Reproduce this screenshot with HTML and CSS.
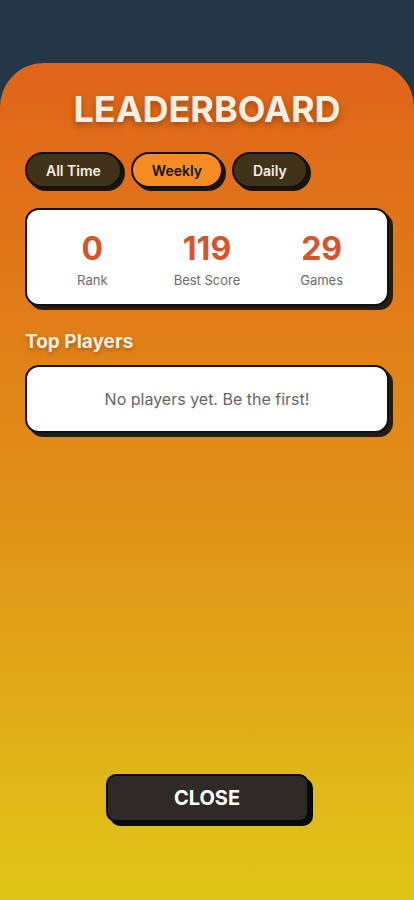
FILE: index.html
```html
<!DOCTYPE html>
<html lang="en">
<head>
  <meta charset="UTF-8">
  <meta name="viewport" content="width=device-width, initial-scale=1.0">
  <title>Leaderboard</title>
  <link rel="stylesheet" href="styles.css">
</head>
<body>

  <div class="sheet">
    <h1 class="title">LEADERBOARD</h1>

    <div class="tabs">
      <button class="tab">All Time</button>
      <button class="tab active">Weekly</button>
      <button class="tab">Daily</button>
    </div>

    <div class="card stats">
      <div class="stat">
        <div class="stat-value">0</div>
        <div class="stat-label">Rank</div>
      </div>
      <div class="stat">
        <div class="stat-value">119</div>
        <div class="stat-label">Best Score</div>
      </div>
      <div class="stat">
        <div class="stat-value">29</div>
        <div class="stat-label">Games</div>
      </div>
    </div>

    <h2 class="section-title">Top Players</h2>
    <div class="card empty">No players yet. Be the first!</div>

    <button class="close">CLOSE</button>
  </div>

</body>
</html>
```

FILE: styles.css
```css
body {
  margin: 0;
  padding: 0;
  background-color: #253747;
  font-family: Inter, "Noto Sans", sans-serif;
}

.sheet {
  margin-top: 63px;
  min-height: 837px;
  box-sizing: border-box;
  padding: 0 25px 78px 25px;
  border-radius: 44px 44px 0 0;
  background: linear-gradient(180deg, #e06419 0%, #e09018 52%, #e0c618 100%);
  display: flex;
  flex-direction: column;
}

.title {
  margin: 24px 0 0 0;
  text-align: center;
  font-size: 36px;
  font-weight: 700;
  line-height: 44px;
  color: #f6efe2;
  text-shadow: 0 3px 6px rgba(90, 30, 0, 0.45);
}

.tabs {
  display: flex;
  gap: 9px;
  margin-top: 21px;
}

.tab {
  height: 36px;
  padding: 0 19px;
  border: 2px solid #111;
  border-radius: 18px;
  background: #41331a;
  color: #f5efe4;
  font-family: inherit;
  font-size: 14px;
  font-weight: 600;
  box-shadow: 3px 3px 0 #1d1408;
  cursor: pointer;
}

.tab.active {
  background: #f58c23;
  color: #111;
}

.card {
  background: #fff;
  border: 2px solid #111;
  border-radius: 14px;
  box-shadow: 4px 4px 0 #2b1c08;
}

.stats {
  margin-top: 20px;
  height: 98px;
  box-sizing: border-box;
  padding: 5px 8px 0 8px;
  display: grid;
  grid-template-columns: 1fr 1fr 1fr;
  align-items: center;
}

.stat {
  text-align: center;
}

.stat-value {
  font-size: 32px;
  font-weight: 700;
  line-height: 36px;
  color: #d9532a;
}

.stat-label {
  margin-top: 5px;
  font-size: 13px;
  color: #6b6b6b;
}

.section-title {
  margin: 24px 0 0 0;
  font-size: 19px;
  font-weight: 700;
  line-height: 24px;
  color: #f6efe2;
  text-shadow: 0 2px 4px rgba(90, 30, 0, 0.4);
}

.empty {
  margin-top: 11px;
  height: 68px;
  box-sizing: border-box;
  display: flex;
  align-items: center;
  justify-content: center;
  font-size: 16px;
  color: #666;
}

.close {
  margin: auto auto 0 auto;
  width: 203px;
  height: 48px;
  border: 2px solid #0a0a0a;
  border-radius: 10px;
  background: #2e2a26;
  color: #fff;
  font-family: inherit;
  font-size: 20px;
  font-weight: 700;
  box-shadow: 4px 4px 0 #0a0a0a;
  cursor: pointer;
}
```
